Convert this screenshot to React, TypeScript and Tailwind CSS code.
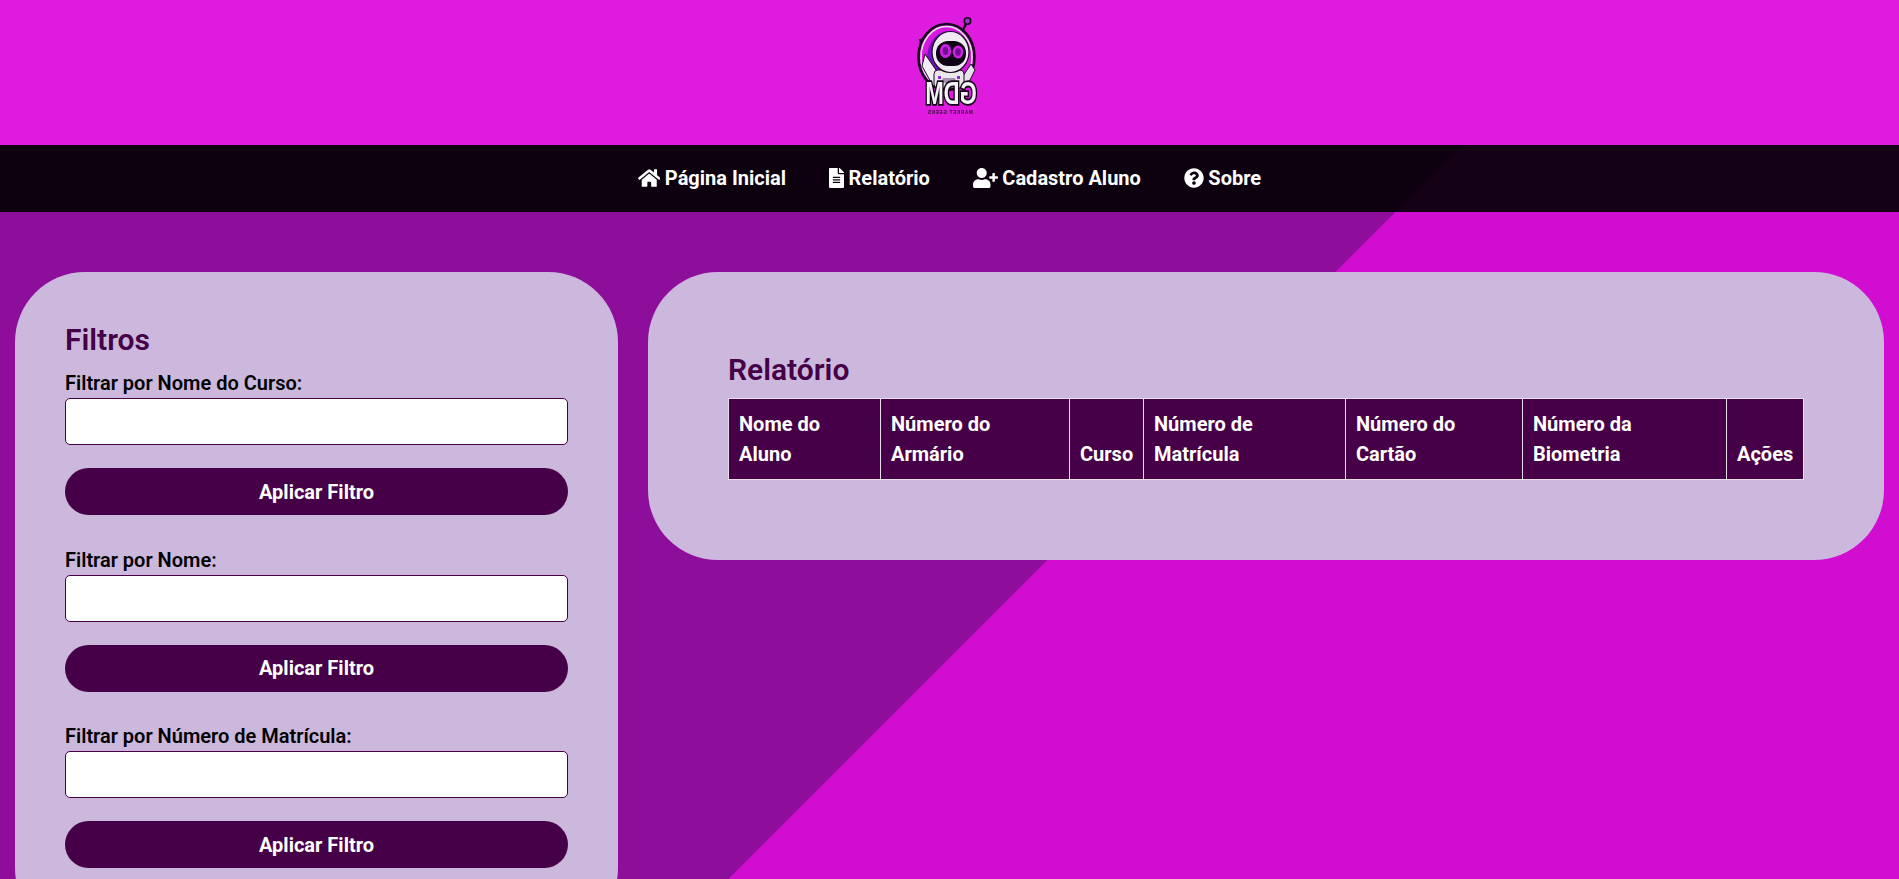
import React from "react";
import { FaHome, FaFileAlt, FaUserPlus, FaQuestionCircle } from "react-icons/fa";

const links = [
  { label: "Página Inicial", icon: FaHome, size: "w-[22.5px] h-[20px]" },
  { label: "Relatório", icon: FaFileAlt, size: "w-[15px] h-[20px]" },
  { label: "Cadastro Aluno", icon: FaUserPlus, size: "w-[25px] h-[20px]" },
  { label: "Sobre", icon: FaQuestionCircle, size: "w-[20px] h-[20px]" },
];

const filters = ["Filtrar por Nome do Curso:", "Filtrar por Nome:", "Filtrar por Número de Matrícula:"];

const columns = [
  { label: "Nome do Aluno", width: "w-[152px]" },
  { label: "Número do Armário", width: "w-[189px]" },
  { label: "Curso", width: "w-[74px]" },
  { label: "Número de Matrícula", width: "w-[202px]" },
  { label: "Número do Cartão", width: "w-[177px]" },
  { label: "Número da Biometria", width: "w-[204px]" },
  { label: "Ações", width: "w-[77px]" },
];

const Logo = () => (
  <svg viewBox="0 0 80 110" className="w-[80px] h-[110px] mr-[9px] blur-[0.5px]">
    {/* antennas */}
    <line x1="56" y1="24" x2="62" y2="12" stroke="#1b0a20" strokeWidth="2.5" />
    <circle cx="62.5" cy="11" r="3.2" fill="#9a35c0" stroke="#1a0a20" strokeWidth="1.6" />
    <line x1="21" y1="46" x2="15" y2="29" stroke="#2a1a30" strokeWidth="3" />
    {/* ring */}
    <ellipse cx="41.5" cy="47" rx="28" ry="33" fill="#d818dc" stroke="#17081c" strokeWidth="2.6" />
    <ellipse cx="41.5" cy="47" rx="25.5" ry="30.5" fill="none" stroke="#e9e2ec" strokeWidth="1.6" />
    <path d="M22 60 C20 40 26 24 42 21 C58 20 65 32 63 50 L52 62 L28 66 Z" fill="#7510c4" />
    {/* arms */}
    <path d="M20 44 L31 60 L35 72 L28 76 L17 56 Z" fill="#f2eef4" stroke="#1b0a20" />
    <path d="M66 54 L58 66 L56 74 L63 74 L70 60 Z" fill="#e8e2ea" stroke="#1b0a20" />
    {/* body */}
    <rect x="29" y="60" width="30" height="18" rx="4" fill="#ece6ee" stroke="#1b0a20" />
    <path d="M38 68 L50 68 L52 73 L36 73 Z" fill="#a78fb0" />
    <rect x="33" y="66" width="3" height="3" fill="#8a2ad0" />
    <rect x="52" y="66" width="3" height="3" fill="#8a2ad0" />
    {/* head */}
    <ellipse cx="45.5" cy="42" rx="18.5" ry="20.5" fill="#efeaf2" stroke="#1b0a20" strokeWidth="1.2" />
    <rect x="31" y="31" width="30" height="25" rx="12" fill="#0f0414" />
    <ellipse cx="40.5" cy="41" rx="5.6" ry="7" fill="#d21ee6" />
    <ellipse cx="40.5" cy="41" rx="2.8" ry="4" fill="#6a1290" />
    <ellipse cx="53" cy="42" rx="5.4" ry="6.4" fill="#d21ee6" />
    <ellipse cx="53" cy="42" rx="2.8" ry="3.8" fill="#6a1290" />
    {/* wordmark, mirrored as in the source image */}
    <g transform="translate(80 0) scale(-1 1)">
      <text
        transform="translate(34 94) scale(1 1.4)"
        textAnchor="middle"
        fontFamily="'Liberation Sans', sans-serif"
        fontWeight="700"
        fontSize="22"
        fill="#f5f2f6"
        stroke="#120616"
        strokeWidth="2.6"
        paintOrder="stroke"
      >
        GDM
      </text>
      <text
        x="35"
        y="104"
        textAnchor="middle"
        fontFamily="'Liberation Sans', sans-serif"
        fontWeight="700"
        fontSize="4.6"
        letterSpacing="0.7"
        fill="#2a0f30"
      >
        MARKET GEEKS
      </text>
    </g>
  </svg>
);

export default function App() {
  return (
    <div className="h-[879px] overflow-hidden font-['Roboto',sans-serif] bg-[linear-gradient(135deg,#8e0e9c_1137px,#d10dd1_1137px)]">
      {/* Header */}
      <header className="h-[145px] bg-[#e01be0] flex justify-center pt-[10px]">
        <Logo />
      </header>

      {/* Nav */}
      <nav className="h-[67px] pb-[2px] bg-[#000000]/90 flex items-center justify-center gap-[43px] text-white">
        {links.map((link) => (
          <a key={link.label} className="flex items-center gap-[4.5px] text-[20px] font-bold">
            <link.icon className={link.size} />
            {link.label}
          </a>
        ))}
      </nav>

      {/* Content */}
      <main className="flex items-start gap-[30px] pt-[60px] px-[15px]">
        <section className="w-[603px] shrink-0 rounded-[70px] bg-[#ccb8dd] pt-[50px] px-[50px] pb-[40px]">
          <h3 className="text-[30px] leading-[36px] font-semibold text-[#450047] mb-[10px]">Filtros</h3>
          {filters.map((label) => (
            <form key={label} className="mb-[29.5px]">
              <label className="block text-[20px] leading-[30px] font-semibold text-black">{label}</label>
              <input className="block w-full h-[47px] rounded-[5px] border border-[#450047] bg-white" />
              <button
                type="button"
                className="block w-full h-[47px] mt-[23px] rounded-[24px] bg-[#450047] text-white text-[20px] font-bold"
              >
                Aplicar Filtro
              </button>
            </form>
          ))}
        </section>

        <section className="flex-1 h-[288px] rounded-[70px] bg-[#ccb8dd] pt-[80px] px-[80px]">
          <h3 className="text-[30px] leading-[36px] font-semibold text-[#450047] mb-[10px]">Relatório</h3>
          <table className="w-[1075px] table-fixed border-collapse text-white text-[20px] font-bold">
            <thead>
              <tr>
                {columns.map((col) => (
                  <th
                    key={col.label}
                    className={`${col.width} align-bottom text-left leading-[30px] px-[10px] py-[10px] bg-[#450047] border border-[#e6e0ea]`}
                  >
                    {col.label}
                  </th>
                ))}
              </tr>
            </thead>
          </table>
        </section>
      </main>
    </div>
  );
}
